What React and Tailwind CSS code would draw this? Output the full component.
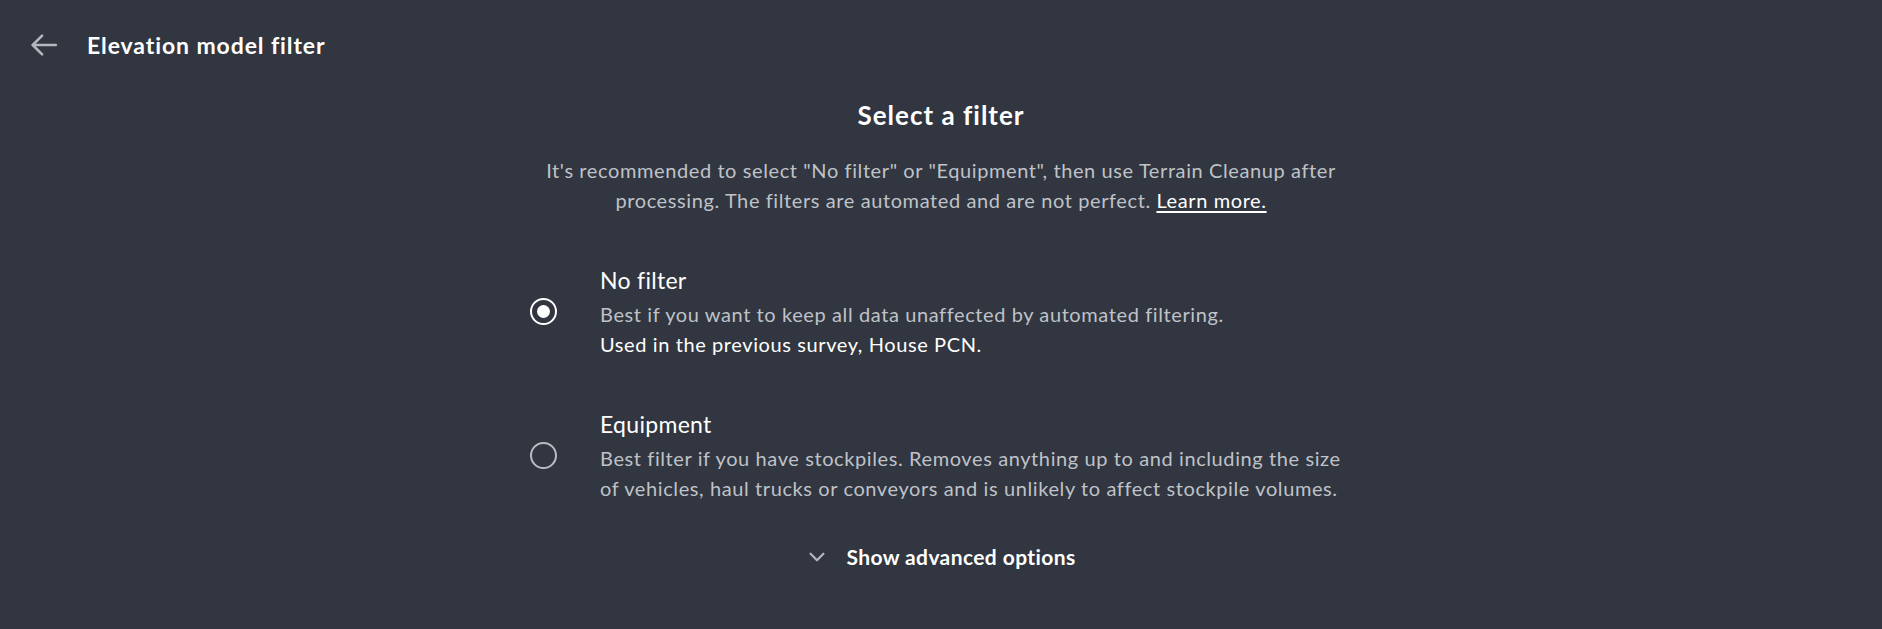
import React, { useState } from 'react';

const options = [
  {
    id: 'none',
    title: 'No filter',
    desc: 'Best if you want to keep all data unaffected by automated filtering.',
    note: 'Used in the previous survey, House PCN.',
  },
  {
    id: 'equipment',
    title: 'Equipment',
    desc: 'Best filter if you have stockpiles. Removes anything up to and including the size of vehicles, haul trucks or conveyors and is unlikely to affect stockpile volumes.',
  },
];

const Radio = ({ checked }) => (
  <span
    className={`flex h-[27px] w-[27px] items-center justify-center rounded-full border-[2.5px] ${
      checked ? 'border-white' : 'border-[#b9bcc2]'
    }`}
  >
    {checked && <span className="h-[13px] w-[13px] rounded-full bg-white" />}
  </span>
);

export default function App() {
  const [selected, setSelected] = useState('none');

  return (
    <div className="min-h-[629px] w-full bg-[#313640] font-['Lato',sans-serif] text-white">
      <header className="flex h-[90px] items-center pl-[29px]">
        <button className="text-[#b4b7bd]">
          <svg width="30" height="30" viewBox="0 0 24 24" fill="none" stroke="currentColor" strokeWidth="2" strokeLinecap="round" strokeLinejoin="round">
            <path d="M21.5 12H3" />
            <path d="M10.5 4.5L3 12l7.5 7.5" />
          </svg>
        </button>
        <h1 className="ml-[28px] text-[23px] font-bold tracking-[0.9px]">Elevation model filter</h1>
      </header>

      <main className="flex flex-col items-center">
        <h2 className="mt-[7px] text-[26px] leading-[36px] font-bold tracking-[1px]">Select a filter</h2>
        <p className="mt-[22px] w-[810px] text-center text-[20px] leading-[30px] tracking-[0.6px] text-[#bfc2c8]">
          It's recommended to select "No filter" or "Equipment", then use Terrain Cleanup after processing. The filters are automated and are not perfect.{' '}
          <a className="text-white underline underline-offset-[3px]" href="#">Learn more.</a>
        </p>

        <div className="mt-[50px] flex w-[822px] flex-col gap-[50px]">
          {options.map((o) => (
            <label key={o.id} className="flex cursor-pointer items-center" onClick={() => setSelected(o.id)}>
              <div className="w-[70px] shrink-0 pb-[2px]">
                <Radio checked={selected === o.id} />
              </div>
              <div className="flex flex-col">
                <span className="mb-[4px] text-[23px] leading-[30px] tracking-[0.3px]">{o.title}</span>
                <span className="text-[20px] leading-[30px] tracking-[0.6px] text-[#bfc2c8]">{o.desc}</span>
                {o.note && <span className="text-[20px] leading-[30px] tracking-[0.6px] text-white">{o.note}</span>}
              </div>
            </label>
          ))}
        </div>

        <button className="mt-[39px] flex items-center gap-[18px] text-[21px] leading-[30px] font-bold tracking-[0.4px]">
          <svg width="22" height="22" viewBox="0 0 24 24" fill="none" stroke="#b4b7bd" strokeWidth="2.4" strokeLinecap="round" strokeLinejoin="round">
            <path d="M5 8.5l7 7 7-7" />
          </svg>
          Show advanced options
        </button>
      </main>
    </div>
  );
}
